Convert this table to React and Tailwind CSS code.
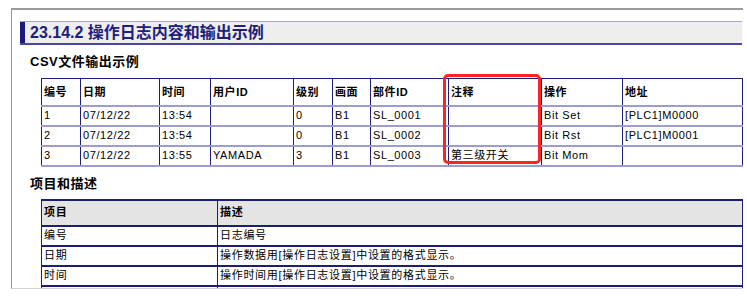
import React from 'react';

const csvHead = ['编号', '日期', '时间', '用户ID', '级别', '画面', '部件ID', '注释', '操作', '地址'];
const csvWidths = ['w-[39px]', 'w-[79px]', 'w-[51px]', 'w-[83px]', 'w-[39px]', 'w-[38px]', 'w-[78px]', 'w-[93px]', 'w-[81px]', 'w-[120px]'];
const csvRows = [
  ['1', '07/12/22', '13:54', '', '0', 'B1', 'SL_0001', '', 'Bit Set', '[PLC1]M0000'],
  ['2', '07/12/22', '13:54', '', '0', 'B1', 'SL_0002', '', 'Bit Rst', '[PLC1]M0001'],
  ['3', '07/12/22', '13:55', 'YAMADA', '3', 'B1', 'SL_0003', '第三级开关', 'Bit Mom', ''],
];

const items = [
  ['编号', '日志编号'],
  ['日期', '操作数据用[操作日志设置]中设置的格式显示。'],
  ['时间', '操作时间用[操作日志设置]中设置的格式显示。'],
  ['用户ID', '显示在[安全设置]中设置的用户ID。对于在安全模式下登录的用户，将显示该用户的ID。'],
];

const csvCell = 'border-x border-x-[#1e1e78] border-y-2 border-y-[#9c9cd0] px-[2px] text-left align-middle whitespace-pre';
const itemCell = 'border-x border-x-[#1e1e78] border-y-2 border-y-[#1e1e6e] px-[2px] text-left align-middle whitespace-nowrap';

export default function App() {
  return (
    <div className="relative w-[747px] h-[306px] bg-white pt-[8px] pl-[11px] font-['Liberation_Sans','Noto_Sans_CJK_SC',sans-serif] text-black">
      <div className="w-[732px] h-[281px] border-t-2 border-l border-[#9a9a9a] border-b border-b-[#d4d4d4] overflow-hidden">
        {/* section title */}
        <div className="ml-[8px] mt-[11px] w-[722px] h-[24px] flex bg-[#eeeeee] border-t border-t-[#a4a4d4] border-b-2 border-b-[#4848a0]">
          <div className="w-[5px] bg-[#1a1a7c]"></div>
          <div className="pl-[5px] text-[16px] leading-[21px] font-bold text-[#20207a]">23.14.2 操作日志内容和输出示例</div>
        </div>

        <div className="ml-[18px] mt-[8px] h-[18px] leading-[18px] text-[13px] font-bold tracking-[0.5px]">CSV文件输出示例</div>

        <table className="ml-[29px] mt-[7px] w-[701px] table-fixed border-collapse text-[11px] tracking-[0.6px]">
          <colgroup>
            {csvWidths.map((w, i) => <col key={i} className={w} />)}
          </colgroup>
          <thead>
            <tr className="h-[27px]">
              {csvHead.map((h) => (
                <th key={h} className={`${csvCell} font-bold border-t-[#1e1e78] border-t`}>{h}</th>
              ))}
            </tr>
          </thead>
          <tbody>
            {csvRows.map((row, r) => (
              <tr key={r} className="h-[20px]">
                {row.map((c, i) => (
                  <td key={i} className={`${csvCell} font-normal`}>{c}</td>
                ))}
              </tr>
            ))}
          </tbody>
        </table>

        <div className="ml-[18px] mt-[8px] h-[18px] leading-[18px] text-[13px] font-bold tracking-[0.5px]">项目和描述</div>

        <table className="ml-[29px] mt-[6px] w-[701px] table-fixed border-collapse text-[11px] tracking-[0.7px]">
          <colgroup>
            <col className="w-[176px]" />
            <col className="w-[525px]" />
          </colgroup>
          <thead>
            <tr className="h-[26px] bg-[#e4e4e4]">
              <th className={`${itemCell} font-bold`}>项目</th>
              <th className={`${itemCell} font-bold`}>描述</th>
            </tr>
          </thead>
          <tbody>
            {items.map(([a, b]) => (
              <tr key={a} className="h-[20px]">
                <td className={itemCell}>{a}</td>
                <td className={itemCell}>{b}</td>
              </tr>
            ))}
          </tbody>
        </table>
      </div>

      {/* highlight box */}
      <div className="absolute left-[443px] top-[74px] w-[98px] h-[90px] border-[3px] border-[#ff2424] rounded-[5px]"></div>
    </div>
  );
}
